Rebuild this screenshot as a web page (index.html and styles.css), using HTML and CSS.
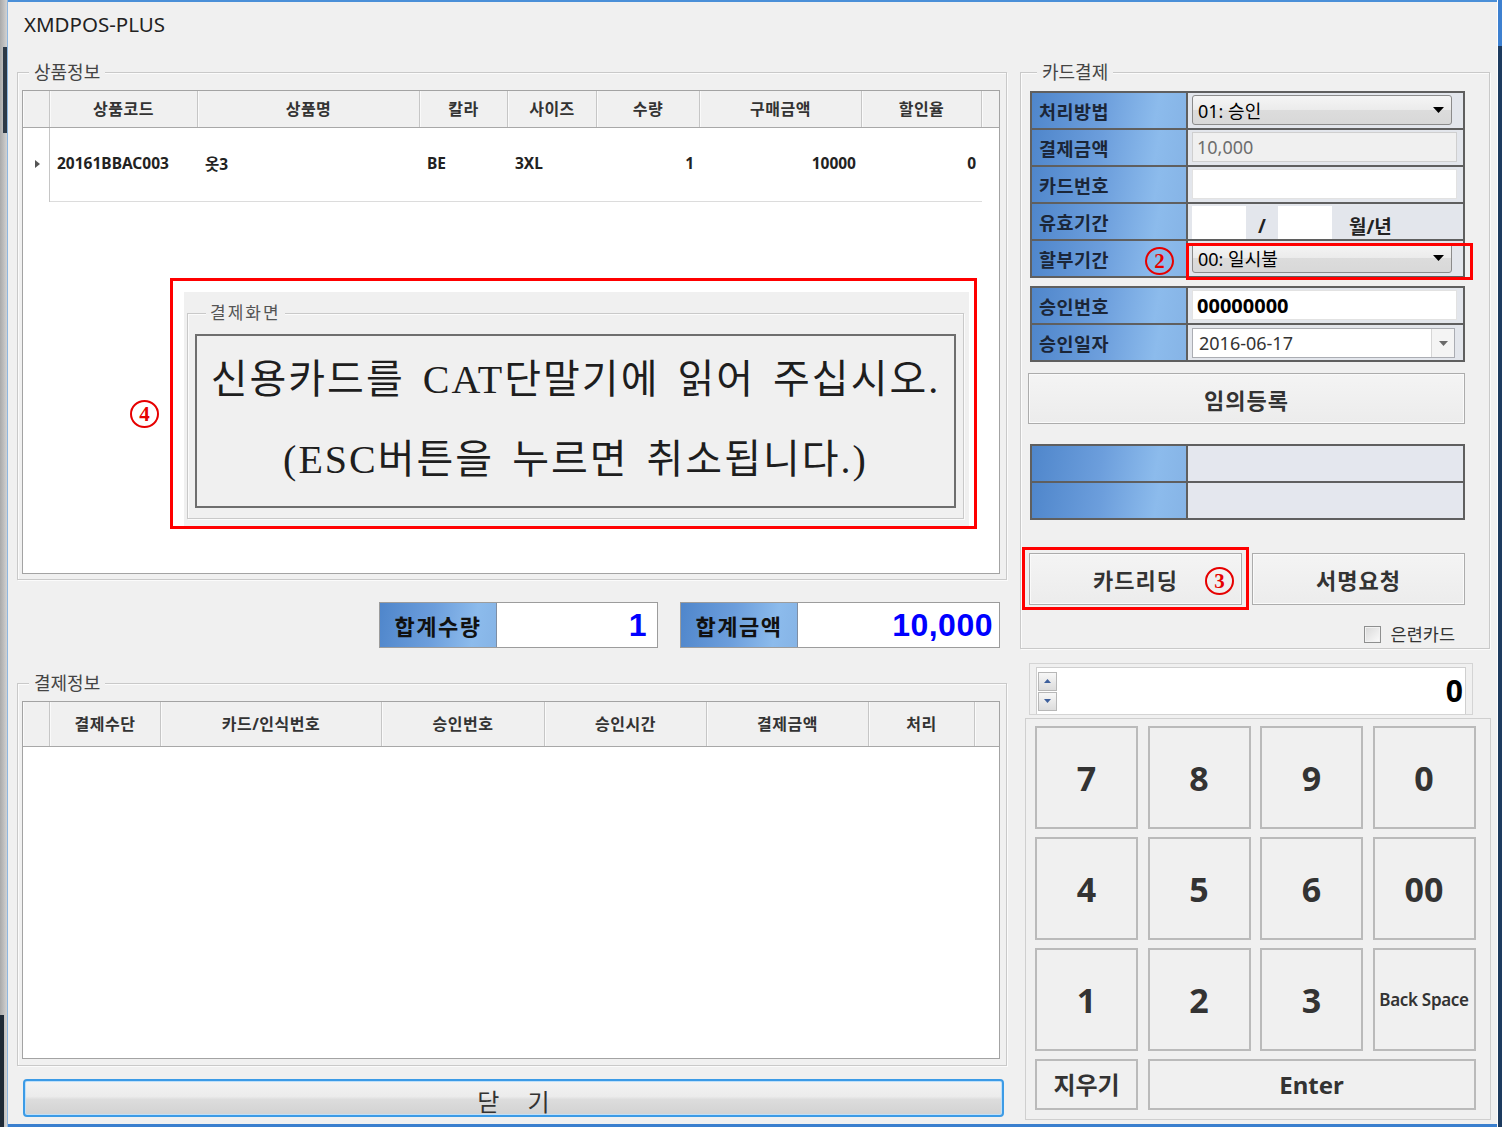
FILE: index.html
```html
<!DOCTYPE html>
<html lang="ko">
<head>
<meta charset="utf-8">
<title>XMDPOS-PLUS</title>
<link rel="stylesheet" href="styles.css">
</head>
<body>
<div class="window">
  <div class="frame-left"></div>
  <div class="app">
    <header class="titlebar">XMDPOS-PLUS</header>
    <div class="main">
      <div class="col-left">
        <section class="group group-product">
          <h2 class="group-title"><span>상품정보</span></h2>
          <div class="grid grid-product">
            <div class="grid-head cols-product">
              <div class="hc"></div>
              <div class="hc">상품코드</div>
              <div class="hc">상품명</div>
              <div class="hc">칼라</div>
              <div class="hc">사이즈</div>
              <div class="hc">수량</div>
              <div class="hc">구매금액</div>
              <div class="hc">할인율</div>
              <div class="hc hc-rest"></div>
            </div>
            <div class="grid-row cols-product">
              <div class="rc rc-header"><span class="row-arrow"></span></div>
              <div class="rc">20161BBAC003</div>
              <div class="rc">옷3</div>
              <div class="rc">BE</div>
              <div class="rc">3XL</div>
              <div class="rc num">1</div>
              <div class="rc num">10000</div>
              <div class="rc num">0</div>
              <div class="rc rc-rest"></div>
            </div>
            <div class="msg-callout">
              <div class="msg-panel">
                <section class="group group-msg">
                  <h2 class="group-title title-msg"><span>결제화면</span></h2>
                  <div class="msg-box">
                    <div class="msg-line">신용카드를 CAT단말기에 읽어 주십시오.</div>
                    <div class="msg-line">(ESC버튼을 누르면 취소됩니다.)</div>
                  </div>
                </section>
              </div>
            </div>
            <span class="badge badge-4">4</span>
          </div>
        </section>

        <div class="totals">
          <div class="total-box">
            <div class="total-label">합계수량</div>
            <div class="total-value qty">1</div>
          </div>
          <div class="total-box">
            <div class="total-label">합계금액</div>
            <div class="total-value amt">10,000</div>
          </div>
        </div>

        <section class="group group-payment">
          <h2 class="group-title"><span>결제정보</span></h2>
          <div class="grid grid-payment">
            <div class="grid-head grid-head-tall cols-payment">
              <div class="hc"></div>
              <div class="hc">결제수단</div>
              <div class="hc">카드/인식번호</div>
              <div class="hc">승인번호</div>
              <div class="hc">승인시간</div>
              <div class="hc">결제금액</div>
              <div class="hc">처리</div>
              <div class="hc hc-rest"></div>
            </div>
          </div>
        </section>

        <button class="close-btn" type="button">닫 기</button>
      </div>

      <div class="col-right">
        <section class="group group-card">
          <h2 class="group-title"><span>카드결제</span></h2>
          <div class="form form-first">
            <div class="frow">
              <div class="flabel">처리방법</div>
              <div class="fval">
                <div class="combo"><span>01: 승인</span><svg width="11" height="6" viewBox="0 0 11 6"><path d="M0 0h11L5.5 6z" fill="#000"/></svg></div>
              </div>
            </div>
            <div class="frow">
              <div class="flabel">결제금액</div>
              <div class="fval"><div class="tb tb-readonly">10,000</div></div>
            </div>
            <div class="frow">
              <div class="flabel">카드번호</div>
              <div class="fval"><div class="tb tb-white"></div></div>
            </div>
            <div class="frow">
              <div class="flabel">유효기간</div>
              <div class="fval fval-exp">
                <div class="tb-small"></div>
                <span class="slash">/</span>
                <div class="tb-small"></div>
                <span class="exp-unit">월/년</span>
              </div>
            </div>
            <div class="frow">
              <div class="flabel">할부기간</div>
              <div class="fval">
                <div class="combo"><span>00: 일시불</span><svg width="11" height="6" viewBox="0 0 11 6"><path d="M0 0h11L5.5 6z" fill="#000"/></svg></div>
              </div>
              <span class="badge badge-2">2</span>
              <span class="red-frame frame-2"></span>
            </div>
          </div>

          <div class="form form-second">
            <div class="frow">
              <div class="flabel">승인번호</div>
              <div class="fval"><div class="tb tb-white tb-bold">00000000</div></div>
            </div>
            <div class="frow">
              <div class="flabel">승인일자</div>
              <div class="fval">
                <div class="datebox"><span>2016-06-17</span><span class="date-drop"><svg width="9" height="5" viewBox="0 0 9 5"><path d="M0 0h9L4.5 5z" fill="#6a6a6a"/></svg></span></div>
              </div>
            </div>
          </div>

          <button class="btn btn-wide" type="button">임의등록</button>

          <div class="form form-info">
            <div class="frow"><div class="flabel"></div><div class="fval fval-plain"></div></div>
            <div class="frow"><div class="flabel"></div><div class="fval fval-plain"></div></div>
          </div>

          <div class="btn-row">
            <button class="btn btn-half btn-reading" type="button">카드리딩<span class="badge badge-3">3</span><span class="red-frame frame-3"></span></button>
            <button class="btn btn-half" type="button">서명요청</button>
          </div>

          <div class="check-row">
            <span class="chk"></span>
            <span class="chk-label">은련카드</span>
          </div>
        </section>

        <div class="num-display">
          <div class="num-inner">
            <div class="spin">
              <span class="spin-btn"><svg width="7" height="4" viewBox="0 0 7 4"><path d="M0 4h7L3.5 0z" fill="#3d5f9c"/></svg></span>
              <span class="spin-btn"><svg width="7" height="4" viewBox="0 0 7 4"><path d="M0 0h7L3.5 4z" fill="#3d5f9c"/></svg></span>
            </div>
            <div class="num-value">0</div>
          </div>
        </div>

        <section class="keypad">
          <button class="key" type="button">7</button>
          <button class="key" type="button">8</button>
          <button class="key" type="button">9</button>
          <button class="key" type="button">0</button>
          <button class="key" type="button">4</button>
          <button class="key" type="button">5</button>
          <button class="key" type="button">6</button>
          <button class="key" type="button">00</button>
          <button class="key" type="button">1</button>
          <button class="key" type="button">2</button>
          <button class="key" type="button">3</button>
          <button class="key key-small" type="button">Back Space</button>
          <button class="key key-clear" type="button">지우기</button>
          <button class="key key-enter" type="button">Enter</button>
        </section>
      </div>
    </div>
  </div>
  <div class="frame-right"></div>
</div>
</body>
</html>
```

FILE: styles.css
```css
* { box-sizing: border-box; }
html, body { margin: 0; padding: 0; }
body {
  width: 1502px;
  height: 1127px;
  overflow: hidden;
  background: #f0f0f0;
  font-family: "Noto Sans", "Noto Sans CJK KR", sans-serif;
  color: #333;
}
button { font-family: inherit; padding: 0; margin: 0; cursor: default; }

.window { display: flex; width: 1502px; height: 1127px; }

.frame-left {
  width: 8px;
  flex: none;
  border-right: 1px solid #8fb6de;
  background:
    linear-gradient(#2d3946, #2d3946) 3px 47px / 4px 86px no-repeat,
    linear-gradient(#1f2a36, #1f2a36) 0 1015px / 4px 112px no-repeat,
    linear-gradient(to right, #a9a9a9, #d2d2d2);
}
.frame-right {
  width: 5px;
  flex: none;
  border-left: 1px solid #ffffff;
  background: linear-gradient(to bottom, #3d80d0 0, #3d80d0 46px, #1d3b5f 46px);
}
.app {
  width: 1489px;
  flex: none;
  height: 1127px;
  background: #f0f0f0;
  border-top: 2px solid #4a8fd8;
  border-bottom: 3px solid #3a7fce;
  display: flex;
  flex-direction: column;
}
.titlebar {
  flex: none;
  height: 70px;
  padding: 9px 0 0 16px;
  font-size: 20.5px;
  line-height: 26px;
  color: #222;
}
.main { display: flex; gap: 13px; padding-left: 9px; }
.col-left { width: 990px; flex: none; display: flex; flex-direction: column; }
.col-right { width: 471px; flex: none; display: flex; flex-direction: column; }

/* group boxes */
.group {
  border: 1px solid #c9c9c9;
  box-shadow: inset 1px 1px 0 #fbfbfb, 1px 1px 0 #fbfbfb;
}
.group-title {
  margin: -11px 0 0 7px;
  height: 20px;
  font-size: 18px;
  line-height: 20px;
  font-weight: 400;
  color: #444;
  display: flex;
}
.group-title span { background: #f0f0f0; padding: 0 5px; }

.group-product { padding: 0 6px 5px 4px; }
.group-payment { margin-top: 35px; padding: 0 6px 6px 4px; }

/* grids */
.grid {
  position: relative;
  width: 978px;
  border: 1px solid #a3a3a3;
  background: #fff;
}
.grid-product { margin-top: 8px; height: 484px; }
.grid-payment { margin-top: 8px; height: 358px; }
.cols-product { grid-template-columns: 27px 148px 222px 88px 89px 103px 162px 120px 1fr; }
.cols-payment { grid-template-columns: 27px 111px 221px 163px 162px 162px 106px 1fr; }
.grid-head {
  display: grid;
  height: 37px;
  background: #f0f0f0;
  border-bottom: 1px solid #a8a8a8;
}
.grid-head-tall { height: 45px; }
.hc {
  border-right: 1px solid #c6c6c6;
  box-shadow: inset 1px 0 0 #fafafa;
  display: flex;
  align-items: center;
  justify-content: center;
  font-weight: 700;
  font-size: 16px;
  color: #333;
  letter-spacing: 0.5px;
  padding-bottom: 2px;
}
.hc-rest { border-right: none; }
.grid-row { display: grid; height: 74px; }
.rc {
  display: flex;
  align-items: center;
  padding: 0 7px;
  font-weight: 700;
  font-size: 15.5px;
  color: #222;
  border-bottom: 1px solid #dcdcdc;
  box-shadow: inset -1px 0 0 #fff;
  padding-bottom: 3px;
}
.rc.num { justify-content: flex-end; padding: 0 6px 3px 0; }
.rc-header {
  border-bottom: none;
  border-right: 1px solid #c6c6c6;
  justify-content: center;
  padding: 0 0 3px 0;
}
.rc-rest { border-bottom: none; }
.row-arrow {
  width: 0;
  height: 0;
  border-left: 5px solid #555;
  border-top: 4px solid transparent;
  border-bottom: 4px solid transparent;
  margin-left: 3px;
}

/* message callout */
.msg-callout {
  position: absolute;
  left: 147px;
  top: 187px;
  width: 807px;
  height: 251px;
  border: 3px solid #ff0000;
  background: #ffffff;
}
.msg-panel {
  margin: 11px 5px 0 11px;
  height: 234px;
  background: #f0f0f0;
  padding: 21px 5px 7px 3px;
}
.group-msg {
  height: 100%;
  padding: 0 7px 10px 7px;
  display: flex;
  flex-direction: column;
}
.title-msg { margin-left: 11px; flex: none; font-size: 17px; letter-spacing: 2px; }
.title-msg span { color: #555; padding: 0 4px; }
.msg-box {
  flex: 1;
  margin-top: 11px;
  border: 2px solid #6e6e6e;
  background: #f0f0f0;
  display: flex;
  flex-direction: column;
  align-items: center;
  padding-top: 4px;
}
.msg-line {
  height: 80px;
  line-height: 80px;
  font-family: "Liberation Serif", "Noto Sans CJK KR", serif;
  font-size: 40px;
  color: #1e1e1e;
  letter-spacing: 2px;
  word-spacing: 6px;
  white-space: nowrap;
}

/* circled number annotations */
.badge {
  position: absolute;
  width: 29px;
  height: 28px;
  border: 2.5px solid #e60000;
  border-radius: 50%;
  color: #e60000;
  font-family: "Liberation Serif", serif;
  font-weight: 700;
  font-size: 21px;
  line-height: 1;
  letter-spacing: 0;
  display: flex;
  align-items: center;
  justify-content: center;
}
.badge-4 { left: 107px; top: 309px; }
.badge-2 { left: 113px; top: 6px; }
.badge-3 { left: 175px; top: 13px; }
.red-frame {
  position: absolute;
  border: 3px solid #ff0000;
  pointer-events: none;
}
.frame-2 { left: 154px; top: 2px; width: 287px; height: 37px; }
.frame-3 { left: -8px; top: -7px; width: 227px; height: 63px; }

/* totals */
.totals {
  margin-top: 22px;
  height: 46px;
  display: flex;
  justify-content: flex-end;
  gap: 22px;
  padding-right: 7px;
}
.total-box { display: flex; border: 1px solid #9c9c9c; }
.total-label {
  width: 117px;
  border-right: 1px solid #7f8ea3;
  background: linear-gradient(100deg, #4f86cb 0%, #6c9edc 45%, #8cbbec 80%, #86b4e6 100%);
  display: flex;
  align-items: center;
  justify-content: center;
  font-weight: 700;
  font-size: 22px;
  letter-spacing: 1.5px;
  color: #111;
}
.total-value {
  background: #fff;
  display: flex;
  align-items: center;
  justify-content: flex-end;
  font-family: "Liberation Sans", sans-serif;
  font-weight: 700;
  font-size: 32px;
  color: #0000ff;
  letter-spacing: 0.5px;
}
.total-value.qty { width: 160px; padding-right: 10px; }
.total-value.amt { width: 201px; padding-right: 6px; }

/* close button */
.close-btn {
  margin: 13px 0 0 6px;
  width: 981px;
  height: 38px;
  border: 2px solid #3c9be6;
  border-radius: 4px;
  box-shadow: inset 0 0 0 1px #bfe0fa;
  background: linear-gradient(to bottom, #f3f3f3 0%, #ececec 45%, #dcdcdc 55%, #d2d2d2 100%);
  font-size: 24px;
  line-height: 1;
  padding-top: 8px;
  color: #333;
  word-spacing: 22px;
}

/* card payment group */
.group-card { width: 470px; padding: 0 0 5px 9px; }
.form {
  width: 435px;
  border: 2px solid #5f5f5f;
}
.form-first { margin-top: 9px; }
.form-second { margin-top: 8px; }
.form-info { margin-top: 20px; }
.frow {
  position: relative;
  display: grid;
  grid-template-columns: 156px 1fr;
  height: 35px;
}
.frow + .frow { border-top: 2px solid #5f5f5f; height: 37px; }
.flabel {
  background: linear-gradient(100deg, #4f86cb 0%, #6c9edc 45%, #8cbbec 80%, #86b4e6 100%);
  border-right: 2px solid #5f5f5f;
  display: flex;
  align-items: center;
  padding-left: 7px;
  font-weight: 700;
  font-size: 18.5px;
  color: #1b2638;
  letter-spacing: 0.5px;
}
.fval {
  background: #e3e6ec;
  padding: 2px 0 0 4px;
  display: flex;
  align-items: flex-start;
}
.fval-plain { background: #e4e7ee; }
.combo {
  width: 260px;
  height: 30px;
  border: 1px solid #8b8b8b;
  border-radius: 3px;
  background: linear-gradient(to bottom, #f5f5f5 0%, #ebebeb 50%, #dcdcdc 51%, #d8d8d8 100%);
  display: flex;
  align-items: center;
  justify-content: space-between;
  padding: 0 7px 0 5px;
  font-size: 18px;
  color: #000;
}
.tb {
  width: 265px;
  height: 30px;
  display: flex;
  align-items: center;
  padding-left: 4px;
  font-size: 18px;
}
.tb-readonly { background: #f0f0f0; border: 1px solid #cfcfcf; color: #6d6d6d; }
.tb-white { background: #fff; border: 1px solid #e2e2e2; }
.tb-bold { font-weight: 700; font-size: 20px; color: #000; }
.fval-exp { align-items: stretch; }
.tb-small { width: 54px; background: #fff; }
.slash {
  width: 32px;
  display: flex;
  align-items: center;
  justify-content: center;
  padding-top: 6px;
  font-size: 19px;
  font-weight: 700;
  color: #222;
}
.exp-unit {
  margin-left: 17px;
  display: flex;
  align-items: center;
  padding-top: 6px;
  font-size: 19px;
  font-weight: 700;
  color: #222;
}
.datebox {
  margin-top: 1px;
  width: 263px;
  height: 30px;
  background: #fff;
  border: 1px solid #abadb3;
  display: flex;
  align-items: center;
  justify-content: space-between;
  padding-left: 6px;
  font-size: 18px;
  color: #333;
}
.date-drop {
  width: 23px;
  height: 100%;
  border-left: 1px solid #d6d6d6;
  background: #f4f4f4;
  display: flex;
  align-items: center;
  justify-content: center;
}

.btn {
  border: 1px solid #acacac;
  box-shadow: inset 0 0 0 1px #fafafa;
  background: linear-gradient(to bottom, #f4f4f4, #ececec);
  font-weight: 700;
  font-size: 22px;
  letter-spacing: 1px;
  color: #333;
}
.btn-wide { margin: 11px 0 0 -2px; width: 437px; height: 51px; }
.btn-row { margin: 33px 0 0 -1px; display: flex; gap: 10px; height: 52px; }
.btn-half { width: 213px; height: 52px; position: relative; }

.check-row {
  margin-top: 21px;
  height: 17px;
  display: flex;
  align-items: center;
  justify-content: flex-end;
  gap: 10px;
  padding-right: 34px;
}
.chk {
  width: 17px;
  height: 17px;
  border: 1px solid #8e8f8f;
  background: linear-gradient(135deg, #d8d8d8, #fbfbfb);
  box-shadow: inset 0 0 0 1px #f2f2f2;
}
.chk-label { font-size: 17.5px; color: #333; line-height: 17px; }

/* numeric display */
.num-display {
  margin: 14px 0 0 9px;
  width: 444px;
  height: 52px;
  border: 1px solid #d4d4d4;
  padding: 3px 6px 0 6px;
}
.num-inner {
  height: 100%;
  background: #fff;
  border: 1px solid #cfcfcf;
  border-bottom: none;
  display: flex;
  align-items: center;
  justify-content: space-between;
  padding: 0 2px 0 1px;
}
.spin { display: flex; flex-direction: column; gap: 1px; }
.spin-btn {
  width: 19px;
  height: 19px;
  border: 1px solid #b7b7b7;
  background: linear-gradient(to bottom, #f7f7f7, #dcdcdc);
  display: flex;
  align-items: center;
  justify-content: center;
}
.num-value { font-weight: 700; font-size: 30px; color: #000; line-height: 1; }

/* keypad */
.keypad {
  margin: 3px 0 0 5px;
  width: 466px;
  height: 402px;
  border: 1px solid #cfcfcf;
  padding: 7px 0 0 9px;
  display: grid;
  grid-template-columns: repeat(4, 103px);
  grid-template-rows: 103px 103px 103px 51px;
  column-gap: 9.5px;
  row-gap: 8px;
}
.key {
  border: 2px solid #bababa;
  background: #f0f0f0;
  font-weight: 700;
  font-size: 34px;
  color: #333;
  line-height: 1;
}
.key-small { font-size: 17px; font-weight: 600; letter-spacing: -0.3px; }
.key-clear { font-size: 24px; }
.key-enter { grid-column: 2 / span 3; font-size: 24px; }
```
